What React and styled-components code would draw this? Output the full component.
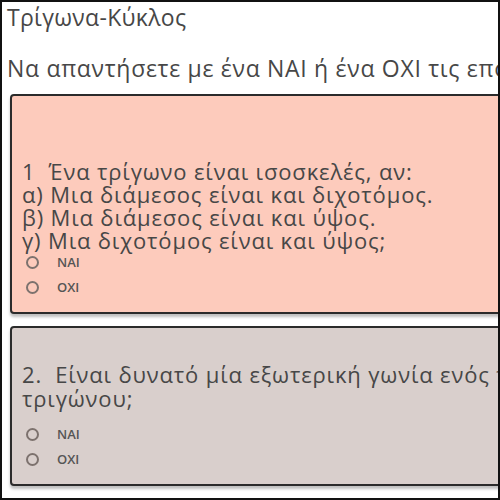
import styled, { createGlobalStyle } from "styled-components";

const GlobalStyle = createGlobalStyle`
  html, body {
    margin: 0;
    padding: 0;
    background: #ffffff;
  }
  body {
    font-family: "Open Sans", "Noto Sans", sans-serif;
    color: #474747;
  }
`;

const questions = [
  {
    id: 1,
    bg: "#fdcbbc",
    lines: [
      "1\u00a0\u00a0Ένα τρίγωνο είναι ισοσκελές, αν:",
      "α) Μια διάμεσος είναι και διχοτόμος.",
      "β) Μια διάμεσος είναι και ύψος.",
      "γ) Μια διχοτόμος είναι και ύψος;",
    ],
    top: 64,
    lh: 23,
    gap: 2,
  },
  {
    id: 2,
    bg: "#d9cfcc",
    lines: [
      "2.\u00a0\u00a0Είναι δυνατό μία εξωτερική γωνία ενός τριγώνου να είναι ίση με μια εσωτερική του",
      "τριγώνου;",
    ],
    top: 34,
    lh: 24,
    gap: 16,
  },
];

const App = () => {
  return (
    <Frame>
      <GlobalStyle />
      <Title>Τρίγωνα-Κύκλος</Title>
      <Intro>Να απαντήσετε με ένα NAI ή ένα OXI τις επόμενες ερωτήσεις</Intro>
      {questions.map((q) => (
        <Card key={q.id} bg={q.bg}>
          <Question top={q.top} lh={q.lh}>
            {q.lines.map((line, i) => (
              <div key={i}>{line}</div>
            ))}
          </Question>
          <Options gap={q.gap}>
            <Option>
              <Radio />
              <Label>NAI</Label>
            </Option>
            <Option>
              <Radio />
              <Label>OXI</Label>
            </Option>
          </Options>
        </Card>
      ))}
    </Frame>
  );
};

const Frame = styled.div`
  width: 500px;
  height: 500px;
  box-sizing: border-box;
  border: 2px solid #111;
  overflow: hidden;
  padding: 1px 0 0 5px;
`;
const Title = styled.h1`
  margin: 0;
  font-size: 23px;
  font-weight: 400;
  line-height: 28px;
  letter-spacing: 0.3px;
  white-space: nowrap;
`;
const Intro = styled.p`
  margin: 23px 0 0;
  font-size: 23px;
  line-height: 28px;
  letter-spacing: 0.7px;
  white-space: nowrap;
`;
const Card = styled.div`
  width: 580px;
  margin: 12px 0 0 3px;
  box-sizing: border-box;
  border: 2px solid #2b2b2b;
  border-radius: 4px;
  background: ${(p) => p.bg};
  box-shadow: 0 3px 3px rgba(0, 0, 0, 0.25);
  padding: 0 0 16px 10px;
  & + & {
    margin-top: 12px;
  }
`;
const Question = styled.div`
  padding-top: ${(p) => p.top}px;
  font-size: 22px;
  line-height: ${(p) => p.lh}px;
  letter-spacing: 0.85px;
  white-space: nowrap;
`;
const Options = styled.div`
  display: flex;
  flex-direction: column;
  gap: 8px;
  margin-top: ${(p) => p.gap}px;
`;
const Option = styled.div`
  display: flex;
  align-items: center;
  gap: 18px;
  padding-left: 4px;
  height: 17px;
`;
const Radio = styled.span`
  width: 9px;
  height: 9px;
  border: 2px solid #7d726e;
  border-radius: 50%;
  flex: none;
`;
const Label = styled.span`
  font-size: 13px;
  line-height: 17px;
  font-weight: 600;
  color: #555;
  letter-spacing: 0;
`;

export default App;
